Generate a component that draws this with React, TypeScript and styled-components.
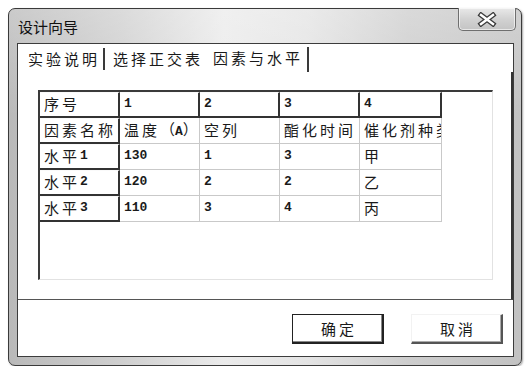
import * as React from 'react';
import styled, { createGlobalStyle } from 'styled-components';

const GlobalStyle = createGlobalStyle`
  html, body {
    margin: 0;
    padding: 0;
    background: #ffffff;
  }
  body {
    font-family: 'Noto Sans CJK SC', 'Liberation Sans', sans-serif;
    color: #1a1a1a;
  }
`;

const CJK = `'Noto Sans CJK SC', 'Noto Sans', sans-serif`;
const MONO = `'Liberation Mono', 'Noto Sans CJK SC', monospace`;

const Window = styled.div`
  box-sizing: border-box;
  margin: 8px 0 0 8px;
  width: 514px;
  height: 358px;
  display: flex;
  flex-direction: column;
  padding: 0 7px 8px 8px;
  border: 1px solid #3a3a3a;
  border-radius: 7px;
  background:
    linear-gradient(180deg, rgba(255, 255, 255, 0.25) 0%, rgba(255, 255, 255, 0) 30%),
    linear-gradient(90deg, #b9b9b9 0%, #cfcfcf 22%, #ebebeb 42%, #e4e4e4 58%, #cdcdcd 78%, #c2c2c2 100%);
  box-shadow: 1px 1px 2px rgba(0, 0, 0, 0.35);
`;

const TitleBar = styled.div`
  height: 34px;
  display: flex;
  align-items: center;
  justify-content: space-between;
  padding-left: 1px;
`;

const Title = styled.span`
  font-family: ${CJK};
  font-size: 15px;
  line-height: 1;
  margin-top: 1px;
  color: #111;
`;

const CloseButton = styled.div`
  align-self: flex-start;
  box-sizing: border-box;
  width: 58px;
  height: 23px;
  margin: -1px -2px 0 0;
  display: flex;
  align-items: center;
  justify-content: center;
  border: 1px solid #6f6f6f;
  border-top: none;
  border-radius: 0 0 5px 5px;
  background: linear-gradient(180deg, #e9e9e9 0%, #d2d2d2 50%, #c4c4c4 100%);
  box-shadow: inset 0 0 0 1px rgba(255, 255, 255, 0.6);
`;

const Client = styled.div`
  flex: 1;
  display: flex;
  flex-direction: column;
  background: #ffffff;
  border: 1px solid #3c3c3c;
`;

const TabStrip = styled.div`
  height: 28px;
  display: flex;
  align-items: flex-end;
`;

const Tab = styled.div<{ $width: number; $pad: number; $active?: boolean; $sep?: boolean }>`
  box-sizing: border-box;
  width: ${p => p.$width}px;
  height: ${p => (p.$active ? 25 : 22)}px;
  margin-bottom: ${p => (p.$active ? 0 : 2)}px;
  padding-left: ${p => p.$pad}px;
  display: flex;
  align-items: ${p => (p.$active ? 'flex-start' : 'center')};
  padding-top: ${p => (p.$active ? 2 : 0)}px;
  border-right: ${p => (p.$sep ? '2px solid #3a3a3a' : 'none')};
  font-family: ${CJK};
  font-size: 15px;
  letter-spacing: 3px;
  line-height: 1.2;
  white-space: nowrap;
`;

const TabPage = styled.div`
  flex: 1;
  box-sizing: border-box;
  padding: 18px 0 0 20px;
  border-right: 2px solid #333;
  border-bottom: 1px solid #555;
`;

const Grid = styled.div`
  box-sizing: border-box;
  width: 455px;
  height: 190px;
  border-top: 2px solid #3a3a3a;
  border-left: 2px solid #3a3a3a;
  border-right: 1px solid #e2e2e2;
  border-bottom: 1px solid #e2e2e2;
  display: grid;
  grid-template-columns: 80px 80px 80px 80px 82px;
  grid-auto-rows: 26px;
  align-content: start;
`;

const Cell = styled.div<{ $fixed?: boolean }>`
  box-sizing: border-box;
  overflow: hidden;
  white-space: nowrap;
  display: flex;
  align-items: center;
  padding: 0 0 2px 4px;
  font-family: ${CJK};
  font-size: 15px;
  letter-spacing: 3px;
  line-height: 1;
  border-right: ${p => (p.$fixed ? '2px solid #333' : '1px solid #c9c9c9')};
  border-bottom: ${p => (p.$fixed ? '2px solid #333' : '1px solid #c9c9c9')};
  border-top: ${p => (p.$fixed ? '1px solid #fafafa' : 'none')};
`;

const Num = styled.span`
  font-family: ${MONO};
  font-size: 13px;
  font-weight: bold;
  letter-spacing: 0;
`;

const Paren = styled.span`
  letter-spacing: 0;
`;

const ButtonBar = styled.div`
  height: 56px;
  box-sizing: border-box;
  display: flex;
  justify-content: flex-end;
  align-items: flex-start;
  gap: 27px;
  padding: 14px 10px 0 0;
`;

const Button = styled.div<{ $default?: boolean }>`
  box-sizing: border-box;
  width: 92px;
  height: 30px;
  display: flex;
  align-items: center;
  justify-content: center;
  padding-left: 3px;
  background: #ffffff;
  font-family: ${CJK};
  font-size: 15px;
  letter-spacing: 3px;
  border-top: 1px solid ${p => (p.$default ? '#222' : '#f2f2f2')};
  border-left: 1px solid ${p => (p.$default ? '#222' : '#f2f2f2')};
  border-right: 2px solid ${p => (p.$default ? '#222' : '#555')};
  border-bottom: 2px solid ${p => (p.$default ? '#222' : '#555')};
  box-shadow: ${p => (p.$default ? 'inset -1px -1px 0 #888' : 'inset -1px -1px 0 #aaa')};
`;

type CellData = { text: React.ReactNode; fixed?: boolean };

const n = (v: string) => <Num>{v}</Num>;

const rows: CellData[][] = [
  [
    { text: '序号', fixed: true },
    { text: n('1'), fixed: true },
    { text: n('2'), fixed: true },
    { text: n('3'), fixed: true },
    { text: n('4'), fixed: true },
  ],
  [
    { text: '因素名称', fixed: true },
    {
      text: (
        <>
          温度<Paren>（{n('A')}）</Paren>
        </>
      ),
    },
    { text: '空列' },
    { text: '酯化时间' },
    { text: '催化剂种类' },
  ],
  [
    { text: <>水平{n('1')}</>, fixed: true },
    { text: n('130') },
    { text: n('1') },
    { text: n('3') },
    { text: '甲' },
  ],
  [
    { text: <>水平{n('2')}</>, fixed: true },
    { text: n('120') },
    { text: n('2') },
    { text: n('2') },
    { text: '乙' },
  ],
  [
    { text: <>水平{n('3')}</>, fixed: true },
    { text: n('110') },
    { text: n('3') },
    { text: n('4') },
    { text: '丙' },
  ],
];

const CloseIcon = () => (
  <svg width="20" height="15" viewBox="0 0 20 15">
    <g strokeLinecap="square">
      <path d="M4 3 L16 12 M16 3 L4 12" stroke="#3a3a3a" strokeWidth="5" />
      <path d="M4 3 L16 12 M16 3 L4 12" stroke="#ffffff" strokeWidth="2.4" />
    </g>
  </svg>
);

export default function App() {
  return (
    <>
      <GlobalStyle />
      <Window>
        <TitleBar>
          <Title>设计向导</Title>
          <CloseButton>
            <CloseIcon />
          </CloseButton>
        </TitleBar>
        <Client>
          <TabStrip>
            <Tab $width={87} $pad={10} $sep>
              实验说明
            </Tab>
            <Tab $width={95} $pad={8}>
              选择正交表
            </Tab>
            <Tab $width={109} $pad={13} $active $sep>
              因素与水平
            </Tab>
          </TabStrip>
          <TabPage>
            <Grid>
              {rows.map((row, ri) =>
                row.map((cell, ci) => (
                  <Cell key={`${ri}-${ci}`} $fixed={cell.fixed}>
                    {cell.text}
                  </Cell>
                ))
              )}
            </Grid>
          </TabPage>
          <ButtonBar>
            <Button $default>确定</Button>
            <Button>取消</Button>
          </ButtonBar>
        </Client>
      </Window>
    </>
  );
}
